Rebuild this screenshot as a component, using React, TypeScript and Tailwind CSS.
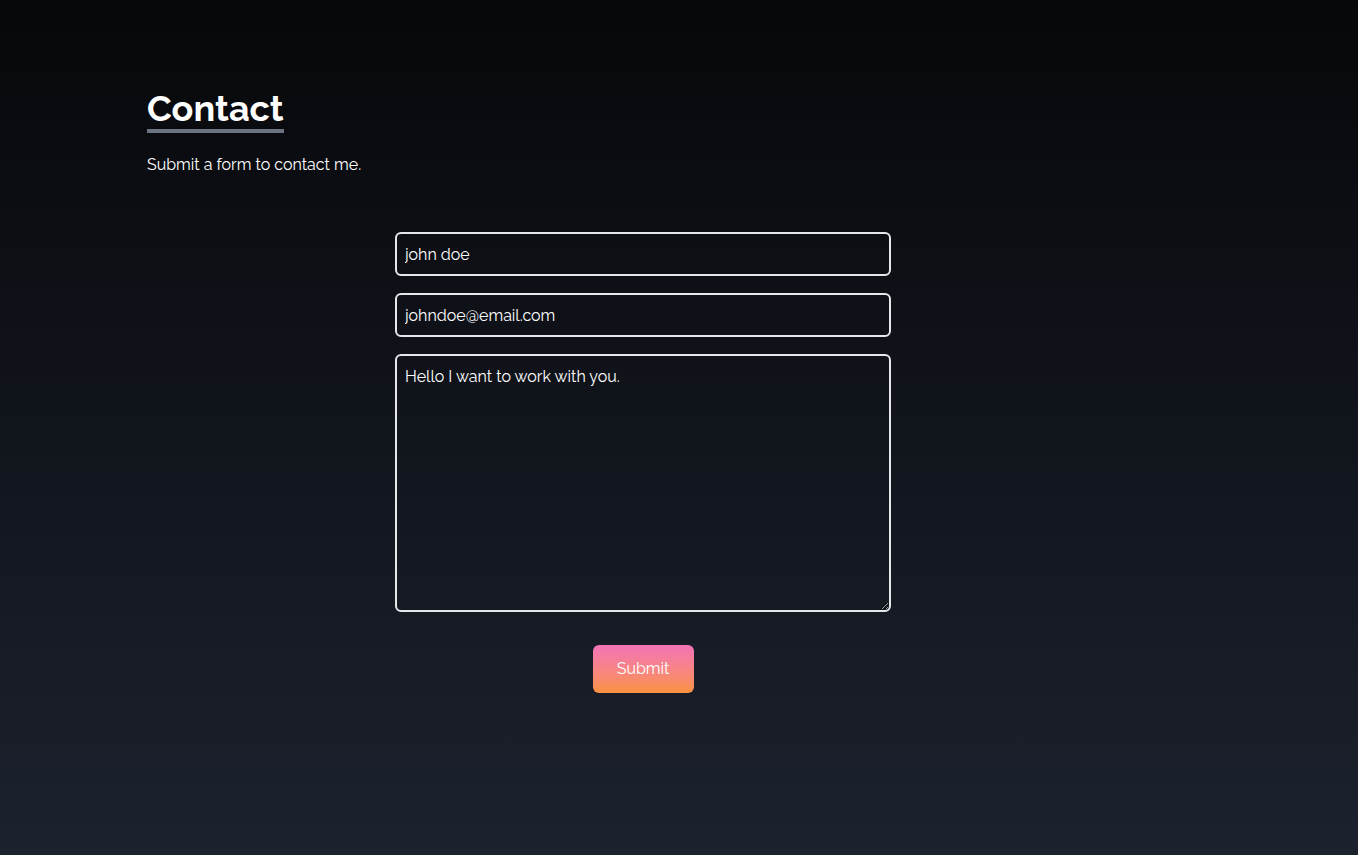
import React from "react";

export default function App() {
  const font = { fontFamily: "Raleway, Lato, 'Open Sans', sans-serif" };
  return (
    <div
      className="min-h-[855px] w-full bg-gradient-to-b from-[#07080b] to-[#1c222e] text-white"
      style={font}
    >
      <div className="mx-auto w-[1064px] pt-[88px]">
        <h1 className="inline-block border-b-4 border-[#6b7280] text-4xl font-bold leading-[41px] text-white">
          Contact
        </h1>
        <p className="mt-[20px] text-base text-white">Submit a form to contact me.</p>
        <div className="mt-[55px] flex w-[992px] justify-center">
          <form className="flex w-[496px] flex-col gap-[17px]" onSubmit={(e) => e.preventDefault()}>
            <input
              type="text"
              defaultValue="john doe"
              className="h-[44px] w-full rounded-md border-2 border-[#e5e7eb] bg-transparent px-[8px] text-base text-white outline-none"
            />
            <input
              type="email"
              defaultValue="johndoe@email.com"
              className="h-[44px] w-full rounded-md border-2 border-[#e5e7eb] bg-transparent px-[8px] text-base text-white outline-none"
            />
            <textarea
              defaultValue="Hello I want to work with you."
              className="h-[258px] w-full rounded-md border-2 border-[#e5e7eb] bg-transparent px-[8px] py-[9px] text-base text-white outline-none"
            />
            <div className="mt-[16px] flex justify-center">
              <button
                type="submit"
                className="h-[48px] w-[101px] rounded-md bg-gradient-to-b from-[#f472b6] to-[#fb923c] text-base text-white"
              >
                Submit
              </button>
            </div>
          </form>
        </div>
      </div>
    </div>
  );
}
